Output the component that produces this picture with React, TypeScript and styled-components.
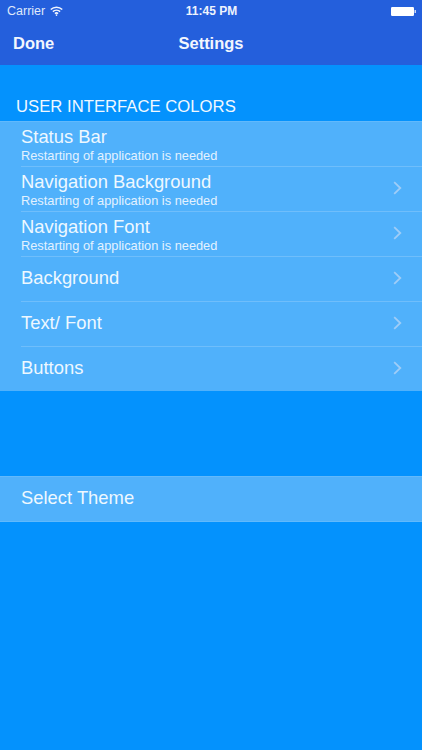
import React from "react";
import styled, { createGlobalStyle } from "styled-components";

const Global = createGlobalStyle`
  html, body { margin: 0; padding: 0; background: #0492fd; }
  body { font-family: "Liberation Sans", Arial, sans-serif; }
`;

const Screen = styled.div`
  width: 422px;
  height: 750px;
  background: #0492fd;
  overflow: hidden;
  color: #fff;
  display: flex;
  flex-direction: column;
`;

const Header = styled.header`
  height: 65px;
  background: #245fdc;
  display: flex;
  flex-direction: column;
`;

const StatusBar = styled.div`
  height: 22px;
  padding: 0 6px 0 7px;
  display: grid;
  grid-template-columns: 1fr auto 1fr;
  align-items: center;
  font-size: 12.5px;
`;

const StatusLeft = styled.div`
  display: flex;
  align-items: center;
  gap: 5px;
  color: #dfe8fa;
`;

const StatusTime = styled.div`
  font-weight: 700;
  color: #eef3fd;
  font-size: 12px;
`;

const StatusRight = styled.div`
  display: flex;
  justify-content: flex-end;
`;

const NavBar = styled.div`
  flex: 1;
  display: grid;
  grid-template-columns: 1fr auto 1fr;
  align-items: center;
  padding: 0 13px;
  font-size: 16.5px;
  font-weight: 700;
  color: #f2f6fe;
`;

const SectionTitle = styled.h2`
  margin: 31px 0 0;
  padding-left: 16px;
  height: 25px;
  line-height: 21px;
  font-size: 16.7px;
  font-weight: 400;
  color: #f0f8ff;
`;

const Group = styled.ul<{ $gap?: number; $open?: boolean }>`
  list-style: none;
  margin: ${(p) => p.$gap ?? 0}px 0 0;
  padding: 0;
  background: #50b1fb;
  border-top: 1px solid #62b9fb;
  border-bottom: ${(p) => (p.$open ? "none" : "1px solid #62b9fb")};
`;

const Row = styled.li`
  position: relative;
  height: 44px;
  padding: 0 20px 0 21px;
  display: flex;
  align-items: center;
  justify-content: space-between;
  & + & {
    margin-top: 1px;
  }
  & + &::before {
    content: "";
    position: absolute;
    left: 21px;
    right: 0;
    top: -1px;
    height: 1px;
    background: #6fbefb;
  }
`;

const RowText = styled.div`
  display: flex;
  flex-direction: column;
`;

const RowTitle = styled.div<{ $withSub?: boolean }>`
  font-size: 18.4px;
  line-height: 21px;
  margin-bottom: ${(p) => (p.$withSub ? 2 : 3)}px;
  color: #eef8ff;
`;

const RowSub = styled.div`
  font-size: 12.8px;
  line-height: 14px;
  color: #e3f2ff;
`;

const Chevron = styled.svg`
  width: 9px;
  height: 14px;
  flex: none;
  margin-bottom: 2px;
`;

const ChevronIcon = () => (
  <Chevron viewBox="0 0 9 14" fill="none">
    <path d="M1.2 1.2 7.3 7 1.2 12.8" stroke="#9fcdf7" strokeWidth="1.8" />
  </Chevron>
);

const Wifi = () => (
  <svg width="13" height="10" viewBox="0 0 14 10.5" fill="none" stroke="#f2f6fe" strokeWidth="1.7">
    <path d="M.8 3.6C4.3.3 9.7.3 13.2 3.6" />
    <path d="M3.1 5.9c2.2-2 5.6-2 7.8 0" />
    <path d="M5.3 8c1-.9 2.4-.9 3.4 0" />
    <circle cx="7" cy="9.6" r=".9" fill="#f2f6fe" stroke="none" />
  </svg>
);

const Battery = () => (
  <svg width="25" height="11" viewBox="0 0 25 11">
    <rect x="0" y="1" width="23" height="9" rx="1.2" fill="#fff" />
    <rect x="23.5" y="4" width="1.5" height="3" fill="#c9d7f5" />
  </svg>
);

type Item = { title: string; sub?: boolean; chevron?: boolean };

const items: Item[] = [
  { title: "Status Bar", sub: true },
  { title: "Navigation Background", sub: true, chevron: true },
  { title: "Navigation Font", sub: true, chevron: true },
  { title: "Background", chevron: true },
  { title: "Text/ Font", chevron: true },
  { title: "Buttons", chevron: true },
];

const ListRow = ({ title, sub, chevron }: Item) => (
  <Row>
    <RowText>
      <RowTitle $withSub={sub}>{title}</RowTitle>
      {sub && <RowSub>Restarting of application is needed</RowSub>}
    </RowText>
    {chevron && <ChevronIcon />}
  </Row>
);

export default function App() {
  return (
    <Screen>
      <Global />
      <Header>
        <StatusBar>
          <StatusLeft>
            Carrier
            <Wifi />
          </StatusLeft>
          <StatusTime>11:45 PM</StatusTime>
          <StatusRight>
            <Battery />
          </StatusRight>
        </StatusBar>
        <NavBar>
          <span>Done</span>
          <span>Settings</span>
          <span />
        </NavBar>
      </Header>
      <SectionTitle>USER INTERFACE COLORS</SectionTitle>
      <Group $open>
        {items.map((item) => (
          <ListRow key={item.title} {...item} />
        ))}
      </Group>
      <Group $gap={85}>
        <ListRow title="Select Theme" />
      </Group>
    </Screen>
  );
}
